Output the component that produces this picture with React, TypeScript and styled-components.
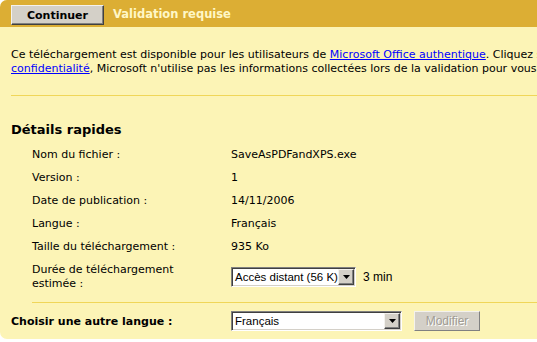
import { Fragment } from "react";
import styled, { createGlobalStyle } from "styled-components";

const GlobalStyles = createGlobalStyle`
  html, body {
    margin: 0;
    padding: 0;
    background: #ffffff;
    overflow: hidden;
  }
  body {
    font-family: "DejaVu Sans", Verdana, sans-serif;
    font-size: 11px;
    color: #000000;
  }
`;

const Card = styled.div`
  width: 760px;
  height: 339px;
  display: flex;
  flex-direction: column;
  background: #fcf4b6;
  border-radius: 7px;
  overflow: hidden;
`;

const Header = styled.div`
  height: 27px;
  background: #dcae34;
  display: flex;
  align-items: center;
  gap: 9px;
  padding-left: 11px;
  box-sizing: border-box;
`;

const ContinueButton = styled.button`
  width: 93px;
  height: 20px;
  padding: 0;
  background: #d4d0c8;
  border: 1px solid;
  border-color: #f4f2ee #404040 #404040 #f4f2ee;
  box-shadow: inset -1px -1px 0 #808080;
  font-family: "DejaVu Sans", Verdana, sans-serif;
  font-weight: bold;
  font-size: 11px;
  color: #000;
  margin-top: 3px;
`;

const Title = styled.span`
  font-weight: bold;
  font-size: 11.5px;
  color: #fff7c6;
  margin-top: 1px;
`;

const Body = styled.div`
  padding: 21px 0 0 11px;
  display: flex;
  flex-direction: column;
`;

const Intro = styled.p`
  margin: 0;
  line-height: 14px;
  white-space: nowrap;
`;

const Link = styled.a`
  color: #0000ff;
  text-decoration: underline;
`;

const Divider = styled.div<{ $top: number; $indent?: number }>`
  height: 1px;
  background: #f0d659;
  margin-top: ${(p) => p.$top}px;
  margin-left: ${(p) => p.$indent ?? 0}px;
`;

const Heading = styled.h2`
  margin: 26px 0 0;
  font-size: 13px;
  line-height: 16px;
  font-weight: bold;
`;

const Details = styled.div`
  display: grid;
  grid-template-columns: 199px auto;
  row-gap: 9px;
  margin-top: 10px;
  padding-left: 21px;
  line-height: 14px;
`;

const Label = styled.div`
  padding-right: 20px;
`;

const Value = styled.div`
  display: flex;
  align-items: center;
  gap: 7px;
`;

const Plain = styled.span`
  font-family: "Liberation Sans", Arial, sans-serif;
  font-size: 12px;
`;

const Select = styled.div<{ $width: number }>`
  width: ${(p) => p.$width}px;
  height: 20px;
  box-sizing: border-box;
  background: #ffffff;
  border: 1px solid;
  border-color: #808080 #ffffff #ffffff #808080;
  box-shadow: inset 1px 1px 0 #404040, inset -1px -1px 0 #d4d0c8;
  display: flex;
  align-items: center;
  justify-content: space-between;
  padding: 1px 1px 1px 3px;
  font-family: "Liberation Sans", Arial, sans-serif;
  font-size: 11.5px;
  line-height: 14px;
  white-space: nowrap;
  overflow: hidden;
`;

const Arrow = styled.span`
  flex: none;
  width: 16px;
  height: 16px;
  box-sizing: border-box;
  background: #d4d0c8;
  border: 1px solid;
  border-color: #f4f2ee #404040 #404040 #f4f2ee;
  box-shadow: inset -1px -1px 0 #808080;
  display: flex;
  align-items: center;
  justify-content: center;
`;

const ChooseRow = styled.div`
  display: grid;
  grid-template-columns: 220px auto auto;
  justify-content: start;
  align-items: center;
  margin-top: 8px;
`;

const ChooseLabel = styled.span`
  font-weight: bold;
  font-size: 11px;
`;

const ModifyButton = styled.button`
  width: 66px;
  height: 20px;
  margin-left: 12px;
  padding: 0;
  background: #d4d0c8;
  border: 1px solid;
  border-color: #f4f2ee #808080 #808080 #f4f2ee;
  font-family: "Liberation Sans", Arial, sans-serif;
  font-size: 12px;
  color: #a09c94;
  text-shadow: 1px 1px 0 #ffffff;
`;

const DropArrow = () => (
  <Arrow>
    <svg width="7" height="4" viewBox="0 0 7 4">
      <path d="M0 0h7L3.5 4z" fill="#000" />
    </svg>
  </Arrow>
);

const details: [string, string][] = [
  ["Nom du fichier :", "SaveAsPDFandXPS.exe"],
  ["Version :", "1"],
  ["Date de publication :", "14/11/2006"],
  ["Langue :", "Français"],
  ["Taille du téléchargement :", "935 Ko"],
];

const App = () => {
  return (
    <>
      <GlobalStyles />
      <Card>
        <Header>
          <ContinueButton>Continuer</ContinueButton>
          <Title>Validation requise</Title>
        </Header>
        <Body>
          <Intro>
            Ce téléchargement est disponible pour les utilisateurs de{" "}
            <Link href="#">Microsoft Office authentique</Link>. Cliquez sur
            Continuer pour valider. Conformément à la déclaration de
            <br />
            <Link href="#">confidentialité</Link>, Microsoft n'utilise pas les
            informations collectées lors de la validation pour vous identifier
            ou vous contacter.
          </Intro>
          <Divider $top={19} />
          <Heading>Détails rapides</Heading>
          <Details>
            {details.map(([label, value]) => (
              <Fragment key={label}>
                <Label>{label}</Label>
                <Value>{value}</Value>
              </Fragment>
            ))}
            <Label>Durée de téléchargement estimée :</Label>
            <Value>
              <Select $width={125}>
                Accès distant (56 K)
                <DropArrow />
              </Select>
              <Plain>3 min</Plain>
            </Value>
          </Details>
          <Divider $top={11} $indent={21} />
          <ChooseRow>
            <ChooseLabel>Choisir une autre langue :</ChooseLabel>
            <Select $width={171}>
              Français
              <DropArrow />
            </Select>
            <ModifyButton disabled>Modifier</ModifyButton>
          </ChooseRow>
        </Body>
      </Card>
    </>
  );
};

export default App;
